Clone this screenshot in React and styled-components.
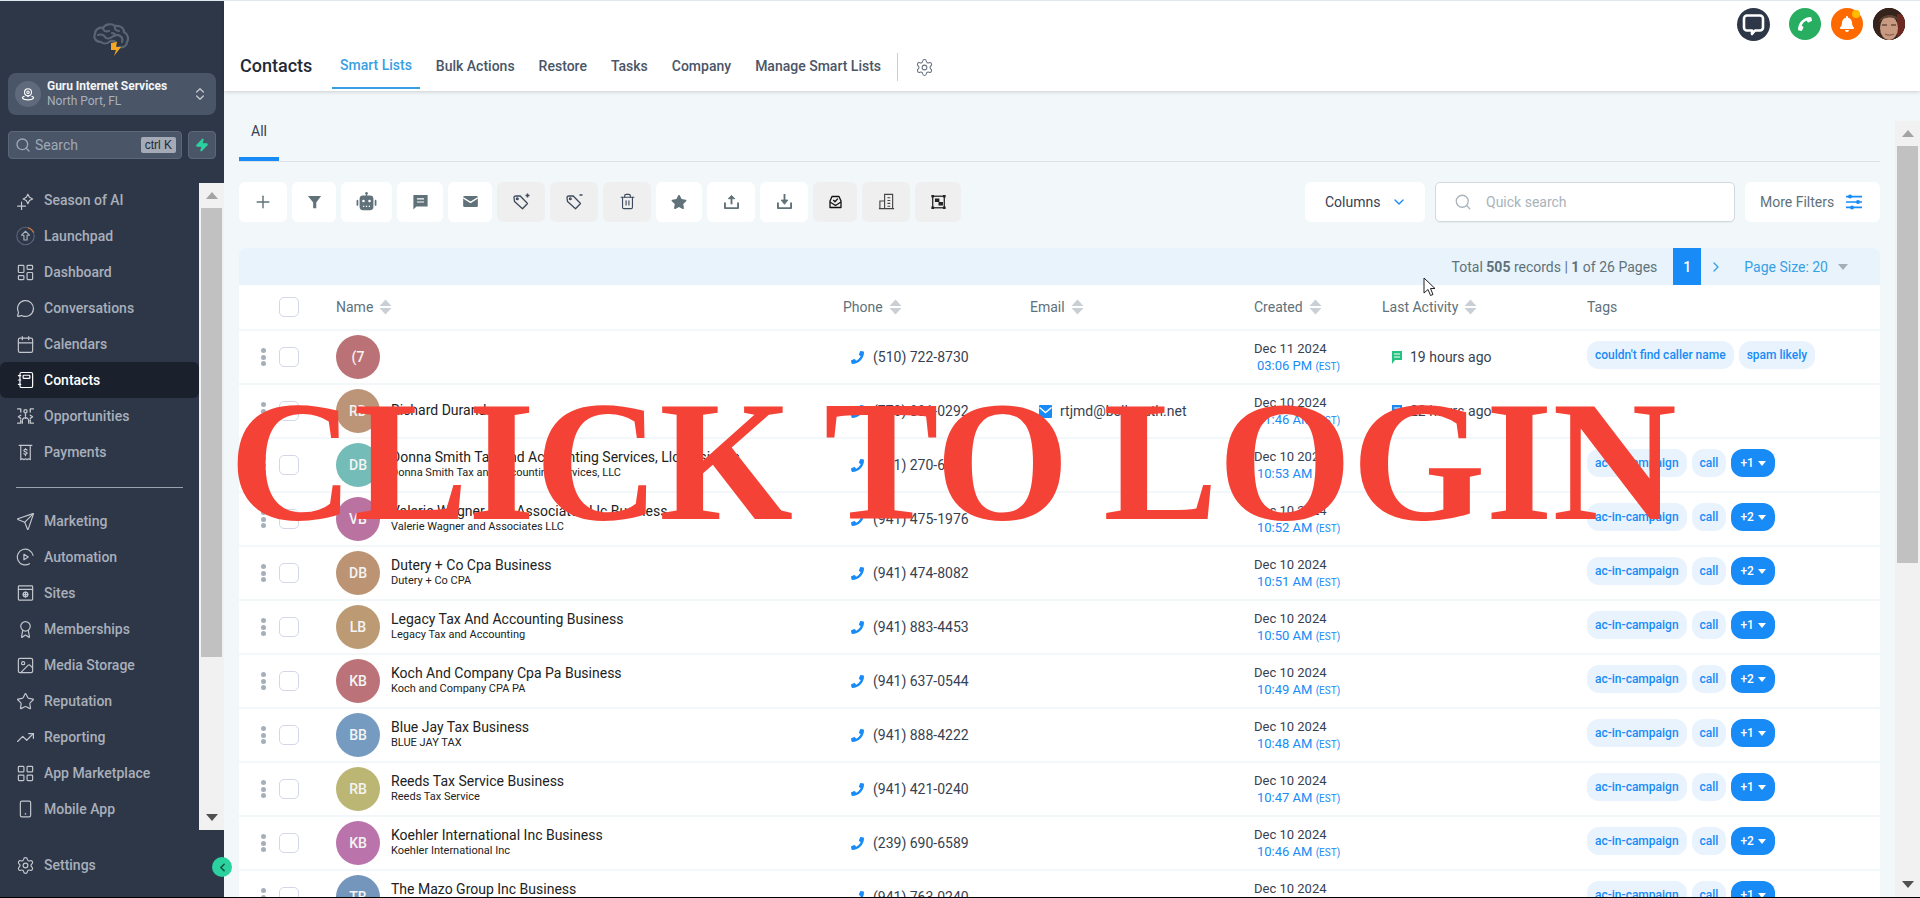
import React from "react";
import styled, { createGlobalStyle } from "styled-components";
import {
  Plus, LayoutDashboard, MessageCircle, Calendar, Send, Award, Image as ImageIcon, Star,
  TrendingUp, LayoutGrid, Settings, ChevronDown, ChevronRight, ChevronLeft, ChevronsUpDown, Search, Trash2, Zap,
} from "lucide-react";
import { FaPhoneAlt, FaBell, FaStar } from "react-icons/fa";

const Global = createGlobalStyle`
  html, body { margin: 0; padding: 0; background: #fff; overflow: hidden; }
  * { box-sizing: border-box; }
  body { font-family: Roboto, "Liberation Sans", sans-serif; }
`;

const Frame = styled.div`
  position: relative; display: flex; width: 1920px; height: 898px; overflow: hidden;
  border-top: 1px solid #e1e7ef; border-bottom: 1px solid #000; background: #f2f7fa;
`;

/* ---------- sidebar ---------- */
const Sidebar = styled.aside`
  flex: 0 0 224px; display: flex; flex-direction: column; background: #2d3748;
`;
const LogoRow = styled.div`display: flex; justify-content: center; padding-top: 21px; height: 72px;`;
const LocationCard = styled.div`
  margin: 0 8px; height: 42px; padding: 0 8px 0 7px; display: flex; align-items: center; gap: 6px;
  background: #4a5568; border-radius: 8px;
`;
const LocationBadge = styled.div`
  width: 26px; height: 26px; border-radius: 50%; background: #5f6b7c; display: flex; align-items: center; justify-content: center;
`;
const LocationText = styled.div`flex: 1; display: flex; flex-direction: column; line-height: 15px;`;
const LocationName = styled.div`font-size: 12px; font-weight: 700; color: #f4f5f7; letter-spacing: -0.04px;`;
const LocationCity = styled.div`font-size: 12px; color: #a9b1bd;`;
const SearchRow = styled.div`margin: 16px 8px 0; display: flex; gap: 6px; height: 28px;`;
const SearchBox = styled.div`
  flex: 1; display: flex; align-items: center; gap: 4px; padding: 0 5px 0 6px;
  background: #4a5568; border: 1px solid #5c6878; border-radius: 4px; color: #a0a9b6; font-size: 14px;
`;
const SearchLabel = styled.span`flex: 1;`;
const Kbd = styled.span`
  background: #a4abb6; color: #1f2937; font-size: 12px; line-height: 16px; padding: 0 4px; border-radius: 2px; font-family: "Liberation Sans", sans-serif;
`;
const BoltButton = styled.div`
  width: 28px; background: #4a5568; border: 1px solid #5c6878; border-radius: 4px; display: flex; align-items: center; justify-content: center;
`;
const NavScroller = styled.div`margin-top: 24px; height: 647px; display: flex;`;
const NavList = styled.nav`flex: 0 0 199px; margin-top: -1px; display: flex; flex-direction: column;`;
const NavItem = styled.div`
  flex: 0 0 36px; height: 36px; display: flex; align-items: center; gap: 9px; padding-left: 16px;
  font-size: 14px; font-weight: 500; border-radius: 6px;
  color: ${p => (p.$active ? "#ffffff" : "#a9afba")};
  background: ${p => (p.$active ? "#1a202c" : "transparent")};
  svg { flex: 0 0 19px; color: ${p => (p.$active ? "#ffffff" : "#c2c6cd")}; }
`;
const NavDivider = styled.div`flex: 0 0 1px; margin: 17px 16px 15px; background: #9aa2ae;`;
const SettingsSlot = styled.div`margin-top: 17px;`;
const Collapse = styled.div`
  position: absolute; left: 212px; top: 856px; width: 20px; height: 20px; border-radius: 50%;
  background: #2bd19f; color: #14523f; display: flex; align-items: center; justify-content: center; z-index: 5;
`;

/* ---------- scrollbars ---------- */
const Rail = styled.div`
  flex: 0 0 25px; width: 25px; display: flex; flex-direction: column; align-items: center; background: #f1f1f1;
  margin-top: ${p => p.$top || 0}px;
`;
const RailArrow = styled.div`
  flex: 0 0 25px; display: flex; align-items: center; justify-content: center;
  &::before {
    content: ""; border-left: 6px solid transparent; border-right: 6px solid transparent;
    ${p => (p.$down ? "border-top: 7px solid #505050;" : "border-bottom: 7px solid #a3a3a3;")}
  }
`;
const RailThumb = styled.div`width: 21px; height: ${p => p.$h}px; background: #c1c1c1;`;
const RailSpace = styled.div`flex: 1;`;

/* ---------- main ---------- */
const Main = styled.main`flex: 1; min-width: 0; display: flex; flex-direction: column;`;
const Header = styled.header`
  flex: 0 0 90px; background: #fff; box-shadow: 0 1px 4px rgba(0,0,0,.16); position: relative; z-index: 2;
  display: flex; flex-direction: column;
`;
const TopRow = styled.div`
  height: 46px; padding: 7px 15px 0 0; display: flex; justify-content: flex-end; align-items: flex-start;
`;
const RoundIcon = styled.div`
  position: relative; width: ${p => p.$size || 32}px; height: ${p => p.$size || 32}px; border-radius: 50%;
  margin-left: ${p => p.$gap}px; background: ${p => p.$bg}; color: #fff;
  display: flex; align-items: center; justify-content: center; overflow: hidden;
`;
const BellWrap = styled.div`position: relative; margin-left: 10px;`;
const BellDot = styled.span`
  position: absolute; right: 3px; top: 2px; width: 8px; height: 8px; border-radius: 50%; background: #ffbc00;
`;
const GreenPhone = styled(FaPhoneAlt)`transform: scaleY(-1);`;
const NavRow = styled.div`flex: 1; padding-left: 16px; display: flex; align-items: flex-start;`;
const Title = styled.div`width: 92px; font-size: 18px; font-weight: 500; color: #1f2937; line-height: 38px;`;
const TabLink = styled.div`
  height: 42px; padding: 0 8px ${p => (p.$active ? 4 : 2)}px; margin-right: 8px; display: flex; align-items: center; font-size: 14px; font-weight: 500;
  color: ${p => (p.$active ? "#37a0e4" : "#4a5568")};
  border-bottom: 2px solid ${p => (p.$active ? "#37a0e4" : "transparent")};
`;
const HeaderDivider = styled.div`width: 1px; height: 28px; margin: 6px 17px 0 0; background: #c9ced6;`;
const GearSlot = styled.div`color: #667080; height: 40px; display: flex; align-items: center;`;

const Body = styled.div`flex: 1; min-height: 0; display: flex;`;
const Content = styled.div`flex: 1; min-width: 0; padding: 0 15px; overflow: hidden;`;
const TabBar = styled.div`height: 71px; display: flex; align-items: flex-end; border-bottom: 1px solid #dde2e8;`;
const SubTab = styled.div`
  width: 40px; height: 56px; display: flex; align-items: center; justify-content: center; font-size: 14px; color: #374151;
  border-bottom: 4px solid #188bf6;
`;
const Toolbar = styled.div`margin-top: 20px; height: 40px; display: flex; justify-content: space-between;`;
const ToolGroup = styled.div`display: flex; gap: ${p => p.$gap}px;`;
const ToolButton = styled.div`
  width: ${p => p.$w}px; height: 40px; border-radius: 6px; display: flex; align-items: center; justify-content: center;
  background: ${p => (p.$muted ? "#efefef" : "#fff")}; color: #607179;
  > svg { margin-top: -1px; }
`;
const ColumnsButton = styled.div`
  width: 120px; height: 40px; background: #fff; border-radius: 6px; display: flex; align-items: center; gap: 11px; padding-left: 20px;
  font-size: 14px; color: #374151; svg { color: #188bf6; }
`;
const QuickSearch = styled.div`
  width: 300px; height: 40px; background: #fff; border: 1px solid #d3d9df; border-radius: 5px; display: flex; align-items: center; gap: 14px;
  padding-left: 18px; font-size: 14px; color: #a9b3bb; box-shadow: 0 1px 1px rgba(0,0,0,.05);
`;
const FiltersButton = styled.div`
  width: 135px; height: 40px; background: #fff; border-radius: 6px; display: flex; align-items: center; gap: 11px; padding-left: 15px;
  font-size: 14px; color: #607179;
`;
const PageBar = styled.div`
  margin-top: 26px; height: 37px; background: #e8f3fc; border-radius: 8px 8px 0 0; display: flex; align-items: center; justify-content: flex-end;
  padding-right: 32px; font-size: 14px; color: #607179;
  b { font-weight: 700; }
`;
const PageNum = styled.div`
  width: 28px; height: 37px; margin-left: 16px; background: #188bf6; color: #fff; font-weight: 500; display: flex; align-items: center; justify-content: center;
`;
const PageNext = styled.div`margin: 0 20px 0 7px; color: #37a0e4; display: flex; width: 16px;`;
const PageSize = styled.div`color: #37a0e4;`;
const Caret = styled.span`
  margin-left: 10px; border-left: 5px solid transparent; border-right: 5px solid transparent; border-top: 6px solid #a3aeb8;
`;

const cols = "40px 57px 507px 187px 224px 128px 205px 1fr";
const HeadRow = styled.div`
  display: grid; grid-template-columns: ${cols}; height: 46px; align-items: center; background: #fff;
  border-bottom: 2px solid #f2f7fa; font-size: 14px; color: #607179;
`;
const HeadCell = styled.div`display: flex; align-items: center; gap: 6px;`;
const Row = styled.div`
  display: grid; grid-template-columns: ${cols}; height: 54px; align-items: center; background: #fff;
  border-bottom: 2px solid #f2f7fa; font-size: 14px; color: #374151;
`;
const Dots = styled.div`
  width: 5px; height: 18px; margin-left: 22px; display: flex; flex-direction: column; justify-content: space-between;
  span { width: 5px; height: 5px; border-radius: 50%; background: #a5b0ba; }
`;
const Check = styled.div`width: 20px; height: 20px; background: #fff; border: 1px solid #d3d8e6; border-radius: 5px;`;
const NameCell = styled.div`display: flex; align-items: center; gap: 11px;`;
const Avatar = styled.div`
  width: 44px; height: 44px; border-radius: 50%; background: ${p => p.$c}; color: #f4f4f4; font-size: 14px; font-weight: 500;
  display: flex; align-items: center; justify-content: center; flex: none;
`;
const Names = styled.div`display: flex; flex-direction: column; margin-top: -1px;`;
const Primary = styled.div`font-size: 14px; line-height: 17px; color: #222;`;
const Secondary = styled.div`font-size: 11px; line-height: 14px; color: #222;`;
const IconText = styled.div`
  display: flex; align-items: center; gap: ${p => p.$gap}px; padding-left: ${p => p.$pad}px; white-space: nowrap;
  svg { flex: none; }
`;
const PhoneMark = styled(FaPhoneAlt)`color: #188bf6; width: 13px; height: 13px; transform: scaleX(-1);`;
const DateCell = styled.div`display: flex; flex-direction: column; font-size: 13px; line-height: 17px; color: #374151;`;
const TimeText = styled.div`color: #188bf6; padding-left: 3px; small { font-size: 10px; }`;
const Tags = styled.div`display: flex; gap: 5px; margin-top: -4px;`;
const Tag = styled.div`
  height: 28px; padding: 0 ${p => (p.$solid ? 9 : 8)}px; border-radius: 12px; background: ${p => (p.$solid ? "#188bf6" : "#e8f3fe")}; color: ${p => (p.$solid ? "#fff" : "#188bf6")};
  font-size: 12px; font-weight: 500; display: flex; align-items: center; gap: 3px; white-space: nowrap;
`;
const TagCaret = styled.span`
  border-left: 4px solid transparent; border-right: 4px solid transparent; border-top: 5px solid #fff; margin-left: 1px;
`;
const Overlay = styled.div`
  position: absolute; left: 0; right: 14px; top: 374px; text-align: center; z-index: 10; line-height: 1; white-space: nowrap;
  font-family: "Liberation Serif", serif; font-weight: 700; font-size: 172px; word-spacing: -9px; color: #f44336;
`;
const Cursor = styled.svg`position: absolute; left: 1423px; top: 276px; z-index: 6;`;

/* ---------- drawn icons ---------- */
const Line = ({ children, s = 19, w = 1.5 }) => (
  <svg width={s} height={s} viewBox="0 0 24 24" fill="none" stroke="currentColor" strokeWidth={w} strokeLinecap="round" strokeLinejoin="round">{children}</svg>
);
const Solid = ({ children, w = 18, h = 18, vb = "0 0 24 24", c = "#607179" }) => (
  <svg width={w} height={h} viewBox={vb} fill={c}>{children}</svg>
);
const BrainLogo = () => (
  <svg width="38" height="34" viewBox="0 0 38 34" fill="none" stroke="#5a6472" strokeWidth="2.200" strokeLinecap="round">
    <path d="M8 20C3 20 0 16 2 12c0-5 5-7 8-6 2-4 9-5 12-2 5-1 9 2 9 6 4 2 5 7 3 10 0 4-4 6-7 5-2 1-4 1-5-1" />
    <path d="M8 20c2 2 6 2 8 0s5-1 7 0" />
    <path d="M10 6c0 3 3 4 6 3M22 4c-1 3 1 5 4 5M5 13c3-1 6 0 7 2s5 2 7 0 5-3 8-1M27 14c2 1 3 3 2 6M19 11c2 0 3 1 3 3" />
    <path d="M18 21l6-1-1 5 5 0-7 9 2-6-5 0z" fill="#f5a623" stroke="none" />
  </svg>
);
const PinIcon = () => (
  <svg width="14" height="14" viewBox="0 0 16 16" fill="none" stroke="#fff" strokeWidth="1.200">
    <circle cx="8" cy="6" r="4" /><circle cx="8" cy="6" r="1.400" />
    <path d="M8 11l-1.500-1.500M8 11l1.500-1.500M4 10.500c-2 .7-3 1.500-2 2.500 1 1.300 3 1.700 6 1.700s5-.4 6-1.700c1-1 0-1.800-2-2.500" />
  </svg>
);
const SeasonIcon = () => (<Line><path d="M2 19h10M7 14v10" /><path d="M15 4l2 4 4 2-4 2-2 4-2-4-4-2 4-2z" /></Line>);
const LaunchIcon = () => (
  <svg width="20" height="20" viewBox="0 0 24 24" fill="none" strokeWidth="1.400">
    <circle cx="12" cy="12" r="11" stroke="#59657a" />
    <path d="M15 1.600A11 11 0 0 1 22.500 8" stroke="#e07b2e" />
    <path d="M12 6l5 5h-3v6h-4v-6H7z" stroke="#aab0ba" strokeLinejoin="round" />
  </svg>
);
const ContactsIcon = () => (
  <Line s={20}><rect x="5" y="2.500" width="16" height="19" rx="2" /><rect x="9" y="6" width="8.500" height="4" rx="1" /><path d="M3 6.500h3M3 12h3M3 17.500h3" /></Line>
);
const OppIcon = () => (
  <Line s={20} w={1.700}><circle cx="12" cy="6" r="2" /><path d="M12 9v6M8 21v-3a4 4 0 0 1 8 0v3" strokeDasharray="3 1.500" /><path d="M2 3h4v4M22 3h-4v4M2 21h4v-4M22 21h-4v-4" /><path d="M6 11l-3 2 3 2M18 11l3 2-3 2" /></Line>
);
const PayIcon = () => (
  <Line s={19}><path d="M4 3h16M6 3v18l2-1 2 1 2-1 2 1 2-1 2 1V3" /><path d="M14 9c-1-1.500-4-1-4 .7s4 1.300 4 3-3 1.800-4 .6M12 7v1M12 15v1" /></Line>
);
const AutomationIcon = () => (<Line s={20}><path d="M21.500 10A10 10 0 1 0 17 20.500" /><path d="M10 8.500l5.500 3.500-5.500 3.500z" /></Line>);
const SitesIcon = () => (<Line s={20}><rect x="3" y="3" width="18" height="18" rx="1" /><path d="M3 7.500h18" /><circle cx="12" cy="14" r="3" /><path d="M9 14h6M12 11v6" /></Line>);
const MobileIcon = () => (<Line s={20}><rect x="5.500" y="2" width="13" height="20" rx="2" /><path d="M12 18.200v.1" strokeWidth="2" /></Line>);
const BotIcon = () => (
  <Solid w={23} h={19} vb="0 0 26 22">
    <circle cx="13" cy="1.500" r="1.500" /><rect x="12.200" y="1.500" width="1.600" height="3" />
    <rect x="5" y="4" width="16" height="17" rx="4" /><rect x="1.500" y="9" width="2" height="7" rx="1" /><rect x="22.500" y="9" width="2" height="7" rx="1" />
    <circle cx="9.500" cy="10.500" r="1.500" fill="#fff" /><circle cx="16.500" cy="10.500" r="1.500" fill="#fff" />
    <path d="M9 16h1.400v1.300H9zm3.300 0h1.400v1.300h-1.400zm3.300 0H17v1.300h-1.400z" fill="#fff" />
  </Solid>
);
const FilterIcon = () => (<Solid w={15} h={14} vb="0 0 16 16"><path d="M.5 1h15L10 8.500V15H6.500V8.500z" /></Solid>);
const ChatIcon = () => (<Solid w={17} h={16} vb="0 0 18 18"><path d="M1 1h16v13H4.500L1 17.500z" /><path d="M5 5.500h8M5 9h8" stroke="#fff" strokeWidth="1.300" /></Solid>);
const MailIcon = () => (<Solid w={15} h={11} vb="0 0 16 12"><rect width="16" height="12" rx="1.500" /><path d="M0 2l8 5 8-5" stroke="#fff" strokeWidth="1.400" fill="none" /></Solid>);
const TagIcon = ({ minus }) => (
  <svg width="20" height="20" viewBox="0 0 20 20" fill="none" stroke="#3e4a5b" strokeWidth="1.300" strokeLinejoin="round">
    <path d="M3 5.500Q3 4 4.500 4L9 3.800 16.500 11.500 11.500 16.800 3.500 9.500Z" /><circle cx="6.300" cy="6.700" r="0.900" />
    {minus ? <path d="M15.500 3h3" strokeWidth="1.500" /> : <path d="M14.500 3.500h4M16.500 1.500v4" strokeWidth="1.500" />}
  </svg>
);
const StarIcon = () => <FaStar size={16} color="#607179" />;
const UploadIcon = ({ down }) => (
  <svg width="15" height="15" viewBox="0 0 16 16" fill="none" stroke="#607179" strokeWidth="2" strokeLinejoin="round">
    <path d="M1 9v6h14V9" />
    {down ? <path d="M8 0v8" /> : <path d="M8 2v9" />}
    {down
      ? <path d="M4.500 6.500h7L8 11z" fill="#607179" strokeWidth="1" />
      : <path d="M4.500 5L8 1.500 11.500 5z" fill="#607179" strokeWidth="1" />}
  </svg>
);
const MailCheckIcon = () => (
  <svg width="13" height="14" viewBox="0 0 13 14" fill="none" stroke="#111" strokeWidth="1.300" strokeLinejoin="round">
    <path d="M1 6L3 1.500h7L12 6v6.500H1z" /><path d="M1 7l5.500 3.500L12 7" /><path d="M4.200 5L6 6.800l2.800-3.200" />
  </svg>
);
const BuildingIcon = () => (
  <svg width="17" height="17" viewBox="0 0 18 18" fill="none" stroke="#444" strokeWidth="1.200">
    <path d="M1 16.500h16M2 16.500V8.500h5M7 16.500V1.500h8.500v15" /><path d="M10 5h3M10 8h3M10 11h3M10 14h3" />
  </svg>
);
const ResizeIcon = () => (
  <svg width="17" height="16" viewBox="0 0 18 18" fill="none" stroke="#222" strokeWidth="1.400">
    <rect x="2.500" y="2.500" width="13" height="13" /><path d="M5 5h5v4h4v4H9V9H5z" fill="#222" stroke="none" />
    <path d="M1 1h3v3H1zm13 0h3v3h-3zM1 14h3v3H1zm13 0h3v3h-3z" fill="#222" stroke="none" />
  </svg>
);
const SlidersIcon = () => (
  <svg width="18" height="16" viewBox="0 0 18 16" fill="#188bf6">
    <path d="M1 1.800h16v1.600H1zM1 7.200h16v1.600H1zM1 12.600h16v1.600H1z" /><circle cx="5" cy="2.600" r="2" /><circle cx="13" cy="8" r="2" /><circle cx="7" cy="13.400" r="2" />
  </svg>
);
const SortIcon = () => (
  <svg width="13" height="16" viewBox="0 0 13 16" fill="#c9cfd5">
    <path d="M6.500 0.500l6 6.500H0.500zM0.500 9h12l-6 6.500z" />
  </svg>
);
const EmailMark = () => (
  <svg width="13" height="13" viewBox="0 0 13 13"><rect width="13" height="13" fill="#188bf6" rx="1" /><path d="M0.500 2.500l6 5 6-5" stroke="#fff" strokeWidth="1.500" fill="none" /></svg>
);
const ActivityMark = ({ c }) => (
  <svg width="10" height="13" viewBox="0 0 10 13"><path d="M0 0h10v9H3L0 13z" fill={c} /><path d="M2 3h6M2 6h6" stroke="#fff" strokeWidth="1" /></svg>
);
const ChatCircleGlyph = () => (
  <svg width="23" height="23" viewBox="0 0 23 23" fill="none" stroke="#fff" strokeWidth="2.600" strokeLinejoin="round">
    <path d="M5 2.500h13a3 3 0 0 1 3 3v9a3 3 0 0 1-3 3h-5l-3 3.500v-3.500H5a3 3 0 0 1-3-3v-9a3 3 0 0 1 3-3z" />
  </svg>
);
const FaceGlyph = () => (
  <svg width="32" height="32" viewBox="0 0 32 32">
    <rect width="32" height="32" fill="#36231b" />
    <rect x="24" y="6" width="8" height="26" fill="#6e2a22" />
    <ellipse cx="16" cy="20" rx="9" ry="12" fill="#c99a82" />
    <path d="M6 14c2-8 16-10 20-2-4-2-8-3-12-2-3 0-6 2-8 4z" fill="#5e4432" />
    <path d="M9 17h5M18 17h5" stroke="#6b4c3c" strokeWidth="1.400" />
    <path d="M12 26c3 1.500 6 1.500 9 0" stroke="#8f5f50" strokeWidth="1.200" fill="none" />
  </svg>
);

/* ---------- data ---------- */
const navTop = [
  ["Season of AI", <SeasonIcon />], ["Launchpad", <LaunchIcon />], ["Dashboard", <LayoutDashboard size={19} strokeWidth={1.5} />],
  ["Conversations", <MessageCircle size={19} strokeWidth={1.5} />], ["Calendars", <Calendar size={19} strokeWidth={1.5} />],
  ["Contacts", <ContactsIcon />, true], ["Opportunities", <OppIcon />], ["Payments", <PayIcon />],
];
const navBottom = [
  ["Marketing", <Send size={19} strokeWidth={1.5} />], ["Automation", <AutomationIcon />], ["Sites", <SitesIcon />],
  ["Memberships", <Award size={19} strokeWidth={1.5} />], ["Media Storage", <ImageIcon size={19} strokeWidth={1.5} />],
  ["Reputation", <Star size={19} strokeWidth={1.5} />], ["Reporting", <TrendingUp size={19} strokeWidth={1.5} />],
  ["App Marketplace", <LayoutGrid size={19} strokeWidth={1.5} />], ["Mobile App", <MobileIcon />],
];
const tools = [
  [48, <Plus size={20} strokeWidth={1.7} />], [44, <FilterIcon />], [51, <BotIcon />], [46, <ChatIcon />], [44, <MailIcon />],
  [48, <TagIcon />, true], [48, <TagIcon minus />, true], [48, <Trash2 size={17} color="#3e4a5b" strokeWidth={1.6} />, true],
  [46, <StarIcon />], [48, <UploadIcon />], [48, <UploadIcon down />],
  [44, <MailCheckIcon />, true], [48, <BuildingIcon />, true], [46, <ResizeIcon />, true],
];
const rows = [
  { i: "(7", c: "#bb7277", ph: "(510) 722-8730", d: "Dec 11 2024", t: "03:06 PM", act: ["#25c281", "19 hours ago"], tags: ["couldn't find caller name", "spam likely"] },
  { i: "RD", c: "#bc9478", n: "Richard Durand", ph: "(770) 881-0292", em: "rtjmd@bellsouth.net", d: "Dec 10 2024", t: "11:46 AM", act: ["#188bf6", "22 hours ago"], tags: [] },
  { i: "DB", c: "#74bcb7", n: "Donna Smith Tax And Accounting Services, Llc Business", s: "Donna Smith Tax and Accounting Services, LLC", ph: "(941) 270-6455", d: "Dec 10 2024", t: "10:53 AM", more: 1 },
  { i: "VB", c: "#ba72a0", n: "Valerie Wagner And Associates Llc Business", s: "Valerie Wagner and Associates LLC", ph: "(941) 475-1976", d: "Dec 10 2024", t: "10:52 AM", more: 2 },
  { i: "DB", c: "#bc9474", n: "Dutery + Co Cpa Business", s: "Dutery + Co CPA", ph: "(941) 474-8082", d: "Dec 10 2024", t: "10:51 AM", more: 2 },
  { i: "LB", c: "#bc9b74", n: "Legacy Tax And Accounting Business", s: "Legacy Tax and Accounting", ph: "(941) 883-4453", d: "Dec 10 2024", t: "10:50 AM", more: 1 },
  { i: "KB", c: "#bb7278", n: "Koch And Company Cpa Pa Business", s: "Koch and Company CPA PA", ph: "(941) 637-0544", d: "Dec 10 2024", t: "10:49 AM", more: 2 },
  { i: "BB", c: "#759cc0", n: "Blue Jay Tax Business", s: "BLUE JAY TAX", ph: "(941) 888-4222", d: "Dec 10 2024", t: "10:48 AM", more: 1 },
  { i: "RB", c: "#bcb674", n: "Reeds Tax Service Business", s: "Reeds Tax Service", ph: "(941) 421-0240", d: "Dec 10 2024", t: "10:47 AM", more: 1 },
  { i: "KB", c: "#bb74ab", n: "Koehler International Inc Business", s: "Koehler International Inc", ph: "(239) 690-6589", d: "Dec 10 2024", t: "10:46 AM", more: 2 },
  { i: "TB", c: "#7596bc", n: "The Mazo Group Inc Business", s: "The Mazo Group Inc", ph: "(941) 763-0240", d: "Dec 10 2024", t: "10:45 AM", more: 1 },
];

export default function App() {
  return (
    <Frame>
      <Global />
      <Sidebar>
        <LogoRow><BrainLogo /></LogoRow>
        <LocationCard>
          <LocationBadge><PinIcon /></LocationBadge>
          <LocationText>
            <LocationName>Guru Internet Services</LocationName>
            <LocationCity>North Port, FL</LocationCity>
          </LocationText>
          <ChevronsUpDown size={16} color="#c2c6cd" />
        </LocationCard>
        <SearchRow>
          <SearchBox>
            <Search size={16} />
            <SearchLabel>Search</SearchLabel>
            <Kbd>ctrl K</Kbd>
          </SearchBox>
          <BoltButton><Zap size={14} color="#2bd19f" fill="#2bd19f" /></BoltButton>
        </SearchRow>
        <NavScroller>
          <NavList>
            {navTop.map(([label, icon, active]) => (
              <NavItem key={label} $active={active}>{icon}{label}</NavItem>
            ))}
            <NavDivider />
            {navBottom.map(([label, icon]) => (
              <NavItem key={label}>{icon}{label}</NavItem>
            ))}
          </NavList>
          <Rail>
            <RailArrow />
            <RailThumb $h={449} />
            <RailSpace />
            <RailArrow $down />
          </Rail>
        </NavScroller>
        <SettingsSlot>
          <NavItem><Settings size={19} strokeWidth={1.5} />Settings</NavItem>
        </SettingsSlot>
      </Sidebar>
      <Collapse><ChevronLeft size={13} strokeWidth={3} /></Collapse>

      <Main>
        <Header>
          <TopRow>
            <RoundIcon $bg="#2d3748" $size={33}><ChatCircleGlyph /></RoundIcon>
            <RoundIcon $bg="#27ae60" $gap={19}><GreenPhone size={14} /></RoundIcon>
            <BellWrap>
              <RoundIcon $bg="#ff6a00"><FaBell size={16} /></RoundIcon>
              <BellDot />
            </BellWrap>
            <RoundIcon $bg="#3d1f16" $gap={10}><FaceGlyph /></RoundIcon>
          </TopRow>
          <NavRow>
            <Title>Contacts</Title>
            <TabLink $active>Smart Lists</TabLink>
            <TabLink>Bulk Actions</TabLink>
            <TabLink>Restore</TabLink>
            <TabLink>Tasks</TabLink>
            <TabLink>Company</TabLink>
            <TabLink>Manage Smart Lists</TabLink>
            <HeaderDivider />
            <GearSlot><Settings size={19} strokeWidth={1.3} /></GearSlot>
          </NavRow>
        </Header>
        <Body>
          <Content>
            <TabBar><SubTab>All</SubTab></TabBar>
            <Toolbar>
              <ToolGroup $gap={5}>
                {tools.map(([w, icon, muted], idx) => (
                  <ToolButton key={idx} $w={w} $muted={muted}>{icon}</ToolButton>
                ))}
              </ToolGroup>
              <ToolGroup $gap={10}>
                <ColumnsButton>Columns<ChevronDown size={16} /></ColumnsButton>
                <QuickSearch><Search size={18} strokeWidth={1.7} />Quick search</QuickSearch>
                <FiltersButton>More Filters<SlidersIcon /></FiltersButton>
              </ToolGroup>
            </Toolbar>
            <PageBar>
              <span>Total <b>505</b> records | <b>1</b> of 26 Pages</span>
              <PageNum>1</PageNum>
              <PageNext><ChevronRight size={16} /></PageNext>
              <PageSize>Page Size: 20</PageSize>
              <Caret />
            </PageBar>
            <HeadRow>
              <span />
              <Check />
              <HeadCell>Name<SortIcon /></HeadCell>
              <HeadCell>Phone<SortIcon /></HeadCell>
              <HeadCell>Email<SortIcon /></HeadCell>
              <HeadCell>Created<SortIcon /></HeadCell>
              <HeadCell>Last Activity<SortIcon /></HeadCell>
              <HeadCell>Tags</HeadCell>
            </HeadRow>
            {rows.map((r, idx) => (
              <Row key={idx}>
                <Dots><span /><span /><span /></Dots>
                <Check />
                <NameCell>
                  <Avatar $c={r.c}>{r.i}</Avatar>
                  <Names>
                    {r.n && <Primary>{r.n}</Primary>}
                    {r.s && <Secondary>{r.s}</Secondary>}
                  </Names>
                </NameCell>
                <IconText $pad={8} $gap={9}><PhoneMark />{r.ph}</IconText>
                {r.em ? <IconText $pad={9} $gap={8}><EmailMark />{r.em}</IconText> : <span />}
                <DateCell>
                  {r.d}
                  <TimeText>{r.t} <small>(EST)</small></TimeText>
                </DateCell>
                {r.act ? <IconText $pad={10} $gap={8}><ActivityMark c={r.act[0]} />{r.act[1]}</IconText> : <span />}
                <Tags>
                  {(r.tags || ["ac-in-campaign", "call"]).map(t => <Tag key={t}>{t}</Tag>)}
                  {r.more && <Tag $solid>+{r.more}<TagCaret /></Tag>}
                </Tags>
              </Row>
            ))}
          </Content>
          <Rail $top={30}>
            <RailArrow />
            <RailThumb $h={417} />
            <RailSpace />
            <RailArrow $down />
          </Rail>
        </Body>
      </Main>

      <Cursor width="14" height="20" viewBox="0 0 14 20">
        <path d="M1 1v15l4-3.500 2.500 6 2.500-1-2.500-6H12z" fill="#fff" stroke="#222" strokeWidth="1" />
      </Cursor>
      <Overlay>CLICK TO LOGIN</Overlay>
    </Frame>
  );
}
